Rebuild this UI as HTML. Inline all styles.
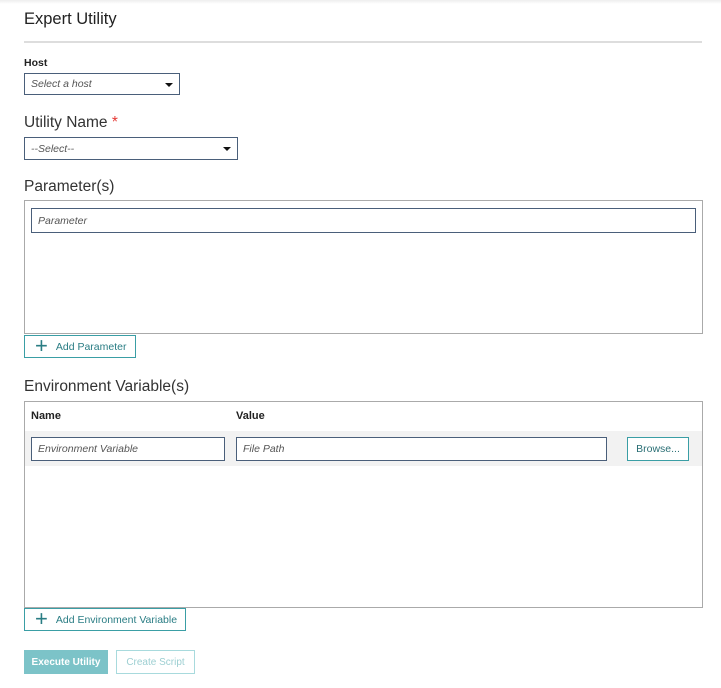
<!DOCTYPE html><html><head><style>
body{margin:0;width:721px;height:688px;background:#fff;font-family:"Liberation Sans",sans-serif;position:relative;overflow:hidden;color:#222}
.a{position:absolute;box-sizing:border-box}
.inp{border:1px solid #4a5f7a;background:#fff;font-style:italic;font-size:10.5px;color:#555;padding-left:6px;display:flex;align-items:center}
.caret{position:absolute;right:6px;top:9px;width:0;height:0;border-left:4px solid transparent;border-right:4px solid transparent;border-top:4px solid #111}
.box{border:1px solid #aaa}
.btn{border:1px solid #3a9ea5;color:#2a7d84;font-size:10.5px;display:flex;align-items:center;background:#fff}
.lbl{font-size:15.5px;color:#333}
.plus{font-size:22px;font-weight:300;margin-right:8px;line-height:1;margin-top:-2px}
</style></head><body>
<div class="a" style="left:0;top:0;width:721px;height:4px;background:linear-gradient(#eee,#fff)"></div>
<div class="a lbl" style="left:24px;top:10px;font-size:16.5px;color:#222">Expert Utility</div>
<div class="a" style="left:24px;top:41px;width:678px;height:2px;background:#ddd"></div>
<div class="a" style="left:24px;top:57px;font-size:10.5px;font-weight:bold">Host</div>
<div class="a inp" style="left:24px;top:73px;width:156px;height:22px">Select a host<div class="caret"></div></div>
<div class="a lbl" style="left:24px;top:114px">Utility Name <span style="color:#e53935">*</span></div>
<div class="a inp" style="left:24px;top:137px;width:214px;height:23px">--Select--<div class="caret"></div></div>
<div class="a lbl" style="left:24px;top:178px">Parameter(s)</div>
<div class="a box" style="left:24px;top:200px;width:679px;height:134px"></div>
<div class="a inp" style="left:31px;top:208px;width:665px;height:25px">Parameter</div>
<div class="a btn" style="left:24px;top:335px;width:112px;height:23px;padding-left:10px"><span class="plus">+</span>Add Parameter</div>
<div class="a lbl" style="left:24px;top:378px">Environment Variable(s)</div>
<div class="a box" style="left:24px;top:401px;width:679px;height:207px"></div>
<div class="a" style="left:31px;top:410px;font-size:11px;font-weight:bold">Name</div>
<div class="a" style="left:236px;top:410px;font-size:11px;font-weight:bold">Value</div>
<div class="a" style="left:25px;top:431px;width:677px;height:35px;background:#f2f2f2"></div>
<div class="a inp" style="left:31px;top:437px;width:194px;height:24px">Environment Variable</div>
<div class="a inp" style="left:236px;top:437px;width:371px;height:24px">File Path</div>
<div class="a btn" style="left:627px;top:437px;width:62px;height:24px;justify-content:center;color:#2a6f75">Browse...</div>
<div class="a btn" style="left:24px;top:608px;width:162px;height:23px;padding-left:10px"><span class="plus">+</span>Add Environment Variable</div>
<div class="a" style="left:24px;top:650px;width:84px;height:24px;background:#7cc3c8;color:#fff;font-size:10px;font-weight:bold;display:flex;align-items:center;justify-content:center">Execute Utility</div>
<div class="a" style="left:116px;top:650px;width:79px;height:24px;border:1px solid #a8dadd;color:#9dcfd2;font-size:10px;display:flex;align-items:center;justify-content:center">Create Script</div>
</body></html>
